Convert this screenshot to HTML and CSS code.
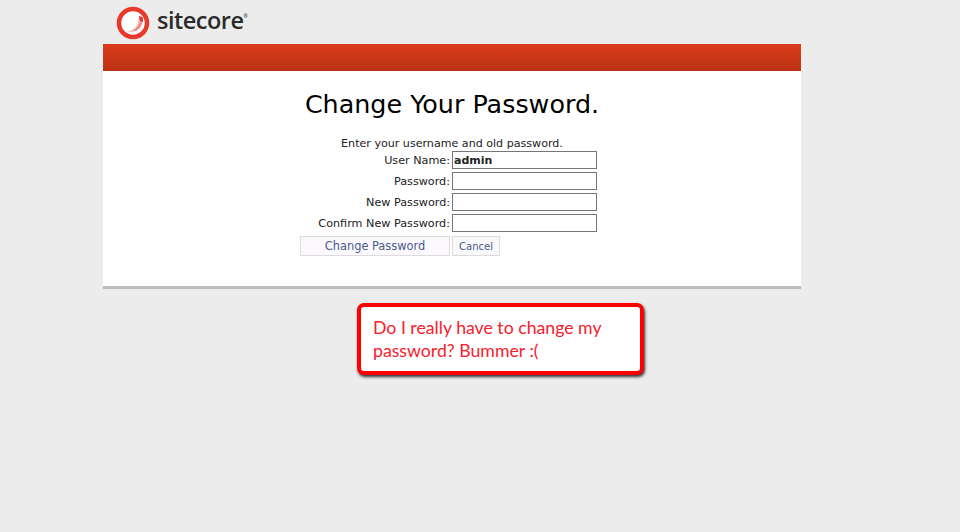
FILE: index.html
```html
<!DOCTYPE html>
<html>
<head>
  <title>Change Your Password</title>
  <meta charset="UTF-8">
  <link rel="stylesheet" href="styles.css">
</head>
<body>
  <div class="page">
    <div class="logo-bar">
      <svg class="logo-mark" width="36" height="36" viewBox="0 0 36 36">
        <circle cx="18" cy="18" r="14" fill="#fff" stroke="#e8392b" stroke-width="4.5"/>
        <!-- swirl, lower right of the ring -->
        <path d="M11 26 C19 27 24 21 24 11 L27 12 C29 19 25 29 11 26 Z" fill="#f08a80"/>
        <path d="M13 26 C20 25 25 20 25.5 12" fill="none" stroke="#fff" stroke-width="0.7"/>
        <path d="M24 11 L28 12.5 L28 17 L25 16 Z" fill="#e8392b"/>
      </svg>
      <span class="logo-text">sitecore<sup>®</sup></span>
    </div>
    <div class="red-bar"></div>
    <div class="panel">
      <h1>Change Your Password.</h1>
      <p class="intro">Enter your username and old password.</p>
      <form class="pw-form">
        <label for="user">User Name:</label>
        <input id="user" class="bold-input" type="text" value="admin">
        <label for="old">Password:</label>
        <input id="old" type="password">
        <label for="new">New Password:</label>
        <input id="new" type="password">
        <label for="confirm">Confirm New Password:</label>
        <input id="confirm" type="password">
        <div class="button-row">
          <button type="button" class="btn-change">Change Password</button>
          <button type="button" class="btn-cancel">Cancel</button>
        </div>
      </form>
    </div>
  </div>
  <div class="callout">Do I really have to change my password? Bummer :(</div>
</body>
</html>
```

FILE: styles.css
```css
body {
  margin: 0;
  background-color: #ececec;
  font-family: "DejaVu Sans", Verdana, sans-serif;
  color: #222;
  overflow: hidden;
}
.page {
  width: 698px;
  margin-left: 103px;
}
.logo-bar {
  height: 44px;
  display: flex;
  align-items: center;
  padding-left: 12px;
  box-sizing: border-box;
}
.logo-mark {
  flex-shrink: 0;
  margin-top: 1px;
}
.logo-text {
  margin-left: 6px;
  font-family: "Open Sans", sans-serif;
  font-size: 23.5px;
  font-weight: 600;
  line-height: 1;
  letter-spacing: -0.5px;
  color: #2b2b2b;
  padding-bottom: 2px;
}
.logo-text sup {
  font-size: 5px;
  vertical-align: 11px;
  line-height: 0;
}
.red-bar {
  height: 27px;
  background: linear-gradient(#dc3c1b, #bb3214);
}
.panel {
  box-sizing: border-box;
  background-color: #fff;
  border-bottom: 3px solid #bdbdbd;
  height: 218px;
  padding-top: 16px;
  text-align: center;
}
h1 {
  margin: 0;
  font-size: 25.4px;
  line-height: 34px;
  font-weight: 400;
  color: #000;
}
.intro {
  margin: 16px 0 0;
  font-size: 11.1px;
  line-height: 13px;
}
.pw-form {
  display: grid;
  grid-template-columns: 147px 145px;
  grid-auto-rows: 18px;
  column-gap: 2px;
  row-gap: 3px;
  justify-content: start;
  margin-left: 200px;
  margin-top: 1px;
  font-size: 11.2px;
  text-align: right;
}
.pw-form label {
  line-height: 20px;
}
.pw-form input {
  width: 145px;
  height: 18px;
  box-sizing: border-box;
  margin: 0;
  padding: 0 1px;
  border: 1px solid #767676;
  border-radius: 0;
  outline: none;
  font-family: inherit;
  font-size: 11px;
  color: #222;
}
.pw-form .bold-input {
  font-weight: bold;
}
.button-row {
  grid-column: 1 / -1;
  display: flex;
  gap: 2px;
  margin-top: 1px;
  margin-left: -3px;
}
.button-row button {
  height: 20px;
  box-sizing: border-box;
  margin: 0;
  padding: 0;
  border: 1px solid #dcdcdc;
  font-family: inherit;
  color: #4a5a8a;
}
.btn-change {
  width: 150px;
  font-size: 11.4px;
  background-color: #fbf8fe;
}
.btn-cancel {
  width: 48px;
  font-size: 10px;
  background-color: #f9f9fb;
}
.callout {
  position: absolute;
  left: 357px;
  top: 303px;
  width: 287px;
  height: 72px;
  box-sizing: border-box;
  padding: 9px 10px 0 12px;
  background-color: #fff;
  border: 4px solid #ff0000;
  border-radius: 7px;
  box-shadow: 1px 2px 3px #333;
  font-family: "Lato", sans-serif;
  font-size: 17.7px;
  line-height: 23px;
  color: #f8202c;
}
```
